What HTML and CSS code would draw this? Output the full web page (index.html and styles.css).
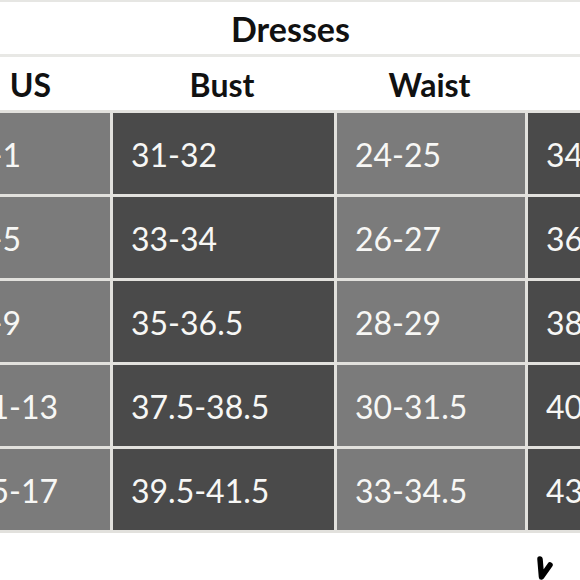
FILE: index.html
```html
<!DOCTYPE html>
<html>
<head>
<meta charset="utf-8">
<link rel="stylesheet" href="styles.css">
</head>
<body>
<div class="page">
  <div class="title">Dresses</div>
  <div class="head">
    <div class="hcell">US</div>
    <div class="hcell">Bust</div>
    <div class="hcell">Waist</div>
    <div class="hcell">Hips</div>
  </div>
  <div class="grid">
    <div class="cell mid">0-1</div><div class="cell dark">31-32</div><div class="cell mid">24-25</div><div class="cell dark">34-35</div>
    <div class="cell mid">3-5</div><div class="cell dark">33-34</div><div class="cell mid">26-27</div><div class="cell dark">36-37</div>
    <div class="cell mid">7-9</div><div class="cell dark">35-36.5</div><div class="cell mid">28-29</div><div class="cell dark">38-39.5</div>
    <div class="cell mid">11-13</div><div class="cell dark">37.5-38.5</div><div class="cell mid">30-31.5</div><div class="cell dark">40-41.5</div>
    <div class="cell mid">15-17</div><div class="cell dark">39.5-41.5</div><div class="cell mid">33-34.5</div><div class="cell dark">43-45</div>
  </div>
  <div class="foot">
    <svg class="mark" width="20" height="26" viewBox="0 0 20 26"><path d="M4 3 L5.5 21 L14 9" fill="none" stroke="#000" stroke-width="5.5" stroke-linecap="round" stroke-linejoin="round"/></svg>
  </div>
</div>
</body>
</html>
```
FILE: styles.css
```css
html, body {
  margin: 0;
  padding: 0;
  background: #fff;
  overflow: hidden;
}
.page {
  width: 580px;
  height: 580px;
  overflow: hidden;
  font-family: Lato, "Liberation Sans", sans-serif;
}
.title {
  height: 52px;
  border-top: 2px solid #e6e6e3;
  border-bottom: 3px solid #e8e8e5;
  display: flex;
  align-items: center;
  justify-content: center;
  font-weight: 700;
  font-size: 34px;
  color: #111;
  padding-left: 1px;
}
.head {
  height: 53px;
  display: grid;
  grid-template-columns: 159px 224px 191px 200px;
  margin-left: -49px;
  width: 774px;
  align-items: center;
  font-weight: 700;
  font-size: 32px;
  color: #111;
}
.hcell {
  text-align: center;
  padding-top: 2px;
}
.grid {
  display: grid;
  grid-template-columns: 156px 221px 188px 200px;
  grid-auto-rows: 81px;
  gap: 3px;
  padding: 3px;
  background: #e2e1dd;
  margin-left: -49px;
  width: 777px;
}
.cell {
  display: flex;
  align-items: center;
  padding-left: 18px;
  font-size: 32px;
  color: #f7f7f5;
  padding-top: 1px;
}
.mid {
  background: #7b7b7b;
}
.dark {
  background: #4a4a4a;
}
.foot {
  display: flex;
  justify-content: flex-end;
  padding-top: 23px;
  padding-right: 24px;
}
.mark {
  display: block;
}
```
